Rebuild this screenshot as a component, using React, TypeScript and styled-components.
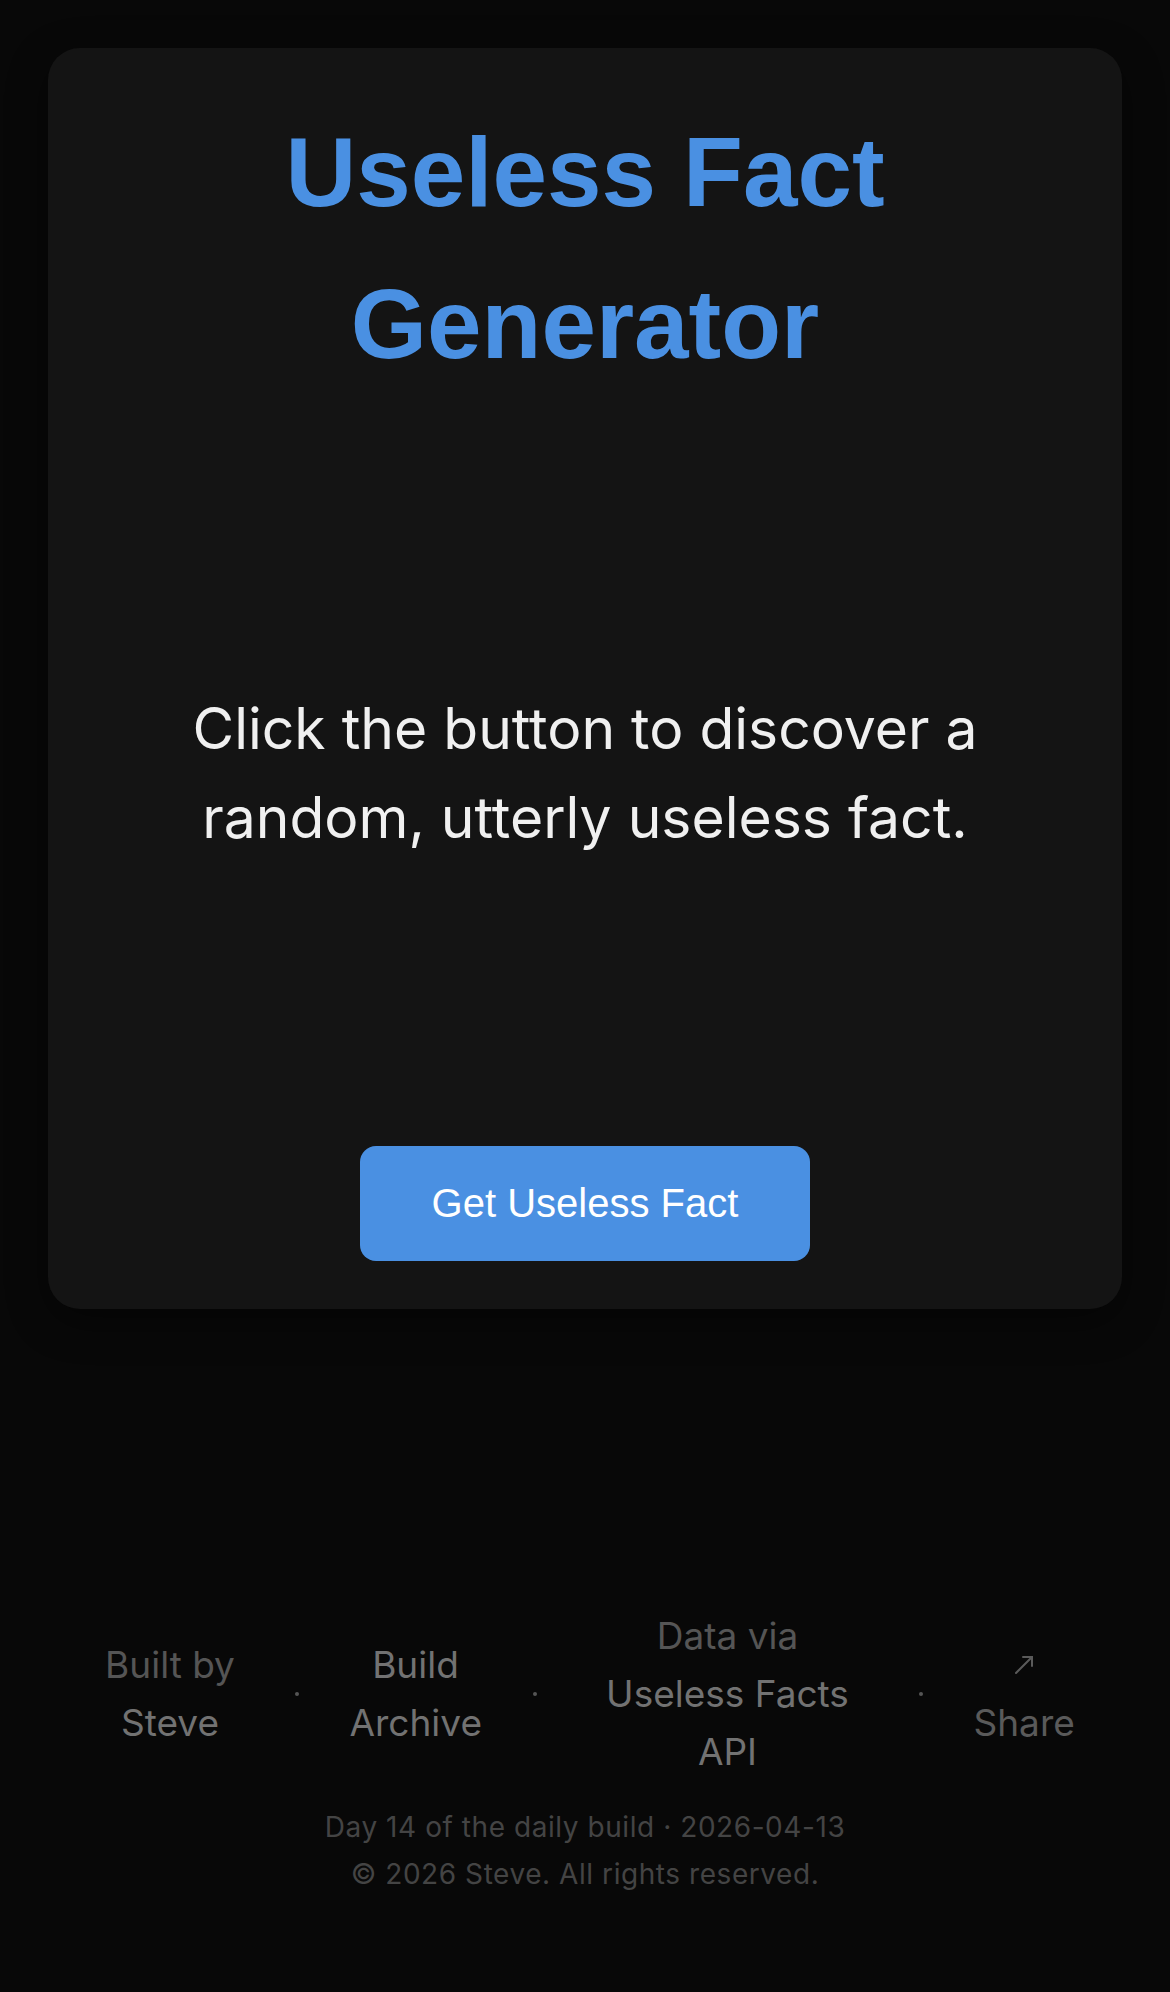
import React from 'react'
import styled, { createGlobalStyle } from 'styled-components'

const GlobalStyle = createGlobalStyle`
  * {
    box-sizing: border-box;
  }

  body {
    margin: 0;
    background: #080808;
    color: #f0f0f0;
    font-family: Inter, "Noto Sans", sans-serif;
  }
`

const Page = styled.div`
  display: flex;
  flex-direction: column;
  padding: 48px 48px 96px;
`

const Card = styled.main`
  display: flex;
  flex-direction: column;
  align-items: center;
  padding: 48px;
  background: #141414;
  border-radius: 32px;
  box-shadow: 0 12px 40px rgba(0, 0, 0, 0.45);
`

const Title = styled.h1`
  margin: 0;
  font-family: "Liberation Sans", Arial, sans-serif;
  font-size: 98px;
  font-weight: 700;
  line-height: 152px;
  text-align: center;
  color: #4a90e2;
`

const FactBox = styled.div`
  display: flex;
  align-items: center;
  justify-content: center;
  min-height: 746px;
`

const Fact = styled.p`
  margin: 0;
  font-size: 57px;
  line-height: 89px;
  text-align: center;
  color: #f0f0f0;
`

const Button = styled.button`
  padding: 35px 72px;
  border: none;
  border-radius: 16px;
  background: #4a90e2;
  color: #ffffff;
  font-family: "Liberation Sans", Arial, sans-serif;
  font-size: 40px;
  cursor: pointer;
`

const Footer = styled.footer`
  display: flex;
  flex-direction: column;
  align-items: center;
  margin-top: 298px;
  gap: 23px;
`

const Links = styled.nav`
  display: flex;
  align-items: center;
  justify-content: center;
  font-size: 37px;
  line-height: 58px;
  text-align: center;
`

const Item = styled.div<{ $w: number }>`
  width: ${(p) => p.$w}px;
`

const Label = styled.span`
  display: block;
  color: #555555;
`

const Link = styled.a<{ $dim?: boolean }>`
  color: ${(p) => (p.$dim ? '#5a5a5a' : '#727272')};
  text-decoration: none;
`

const Arrow = styled.span`
  display: flex;
  align-items: center;
  justify-content: center;
  height: 58px;
`

const Dot = styled.span`
  flex: none;
  width: 4px;
  height: 4px;
  margin: 0 51px;
  border-radius: 50%;
  background: #555555;
`

const Meta = styled.div`
  font-size: 28px;
  line-height: 47px;
  letter-spacing: 0.02em;
  text-align: center;
  color: #444444;
`

function ShareArrow(): JSX.Element {
  return (
    <svg width="20" height="20" viewBox="0 0 20 20" fill="none" stroke="#5a5a5a" strokeWidth="2" strokeLinecap="round">
      <path d="M2 18 L18 2" />
      <path d="M9 2 H18 V11" />
    </svg>
  )
}

export default function App(): JSX.Element {
  return (
    <Page>
      <GlobalStyle />
      <Card>
        <Title>Useless Fact Generator</Title>
        <FactBox>
          <Fact>Click the button to discover a random, utterly useless fact.</Fact>
        </FactBox>
        <Button>Get Useless Fact</Button>
      </Card>
      <Footer>
        <Links>
          <Item $w={147}>
            <Label>Built by</Label>
            <Link href="#">Steve</Link>
          </Item>
          <Dot />
          <Item $w={132}>
            <Link href="#">Build Archive</Link>
          </Item>
          <Dot />
          <Item $w={280}>
            <Label>Data via</Label>
            <Link href="#">Useless Facts API</Link>
          </Item>
          <Dot />
          <Item $w={100}>
            <Link href="#" $dim>
              <Arrow>
                <ShareArrow />
              </Arrow>
              Share
            </Link>
          </Item>
        </Links>
        <Meta>
          <div>Day 14 of the daily build · 2026-04-13</div>
          <div>© 2026 Steve. All rights reserved.</div>
        </Meta>
      </Footer>
    </Page>
  )
}
